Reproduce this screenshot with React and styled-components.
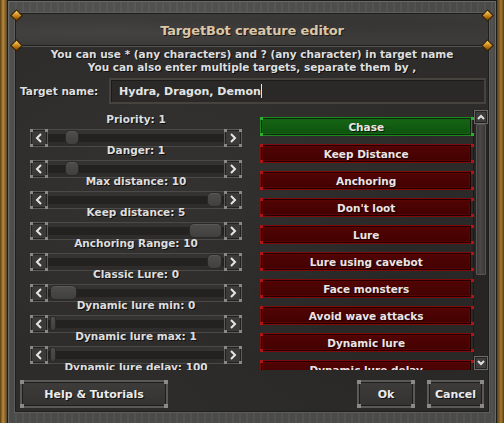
import React from "react";
import styled, { createGlobalStyle, css } from "styled-components";

const Global = createGlobalStyle`
  html, body { margin: 0; padding: 0; }
  body {
    width: 504px;
    height: 423px;
    overflow: hidden;
    background: linear-gradient(90deg, #5a3c12 0px, #b88a3a 3px, #7a5520 6px, #4a4a4a 7px, #4a4a4a 497px, #6a4a1a 498px, #a27a34 501px, #5a3c12 504px);
    font-family: "DejaVu Sans", Verdana, sans-serif;
  }
`;

const Frame = styled.div`
  box-sizing: border-box;
  margin-left: 7px;
  width: 490px;
  height: 423px;
  padding: 12px 7px 0 7px;
  border-left: 1px solid #1c1c1c;
  border-right: 1px solid #1c1c1c;
  border-top: 1px solid #1c1c1c;
  background:
    repeating-linear-gradient(90deg, rgba(255,255,255,0.04) 0 2px, transparent 2px 7px),
    radial-gradient(circle at 30% 20%, rgba(255,255,255,0.05), transparent 60%),
    #4b4b4a;
  box-shadow: inset 1px 1px 0 #6a6a68, inset -1px 0 0 #6a6a68;
`;

const Inner = styled.div`
  box-sizing: border-box;
  width: 474px;
  height: 399px;
  border: 1px solid #1e1e1d;
  box-shadow: 0 0 0 1px #5e5e5c;
  display: flex;
  flex-direction: column;
`;

const Header = styled.div`
  position: relative;
  height: 31px;
  border-bottom: 1px solid #1e1e1d;
  box-shadow: 0 1px 0 #555;
  background:
    radial-gradient(ellipse at 20% 60%, rgba(255,255,255,0.04), transparent 50%),
    radial-gradient(ellipse at 75% 30%, rgba(0,0,0,0.10), transparent 50%),
    #3c3b39;
  display: flex;
  align-items: center;
  justify-content: center;
`;

const Title = styled.div`
  font-weight: bold;
  font-size: 13px;
  color: #dcc6a6;
  letter-spacing: -0.15px;
  margin-top: 2px;
  text-shadow: 1px 1px 0 #1a1a1a;
`;

const Diamond = styled.div`
  position: absolute;
  width: 7px;
  height: 7px;
  transform: rotate(45deg);
  background: linear-gradient(135deg, #ffd870, #c07a10 60%, #6a3a00);
  border: 1px solid #3a2200;
  ${(p) => (p.$right ? css`right: -4px;` : css`left: -4px;`)}
  ${(p) => (p.$bottom ? css`bottom: -5px;` : css`top: -3px;`)}
`;

const Content = styled.div`
  flex: 1;
  background:
    radial-gradient(ellipse at 30% 40%, rgba(255,255,255,0.03), transparent 60%),
    radial-gradient(ellipse at 80% 70%, rgba(0,0,0,0.12), transparent 50%),
    #2d2c2b;
  display: flex;
  flex-direction: column;
  color: #dedede;
  font-size: 10.5px;
  font-weight: bold;
`;

const Info = styled.div`
  text-align: center;
  line-height: 13px;
  padding-top: 2px;
  text-shadow: 1px 1px 0 #111;
`;

const NameRow = styled.div`
  display: flex;
  align-items: center;
  margin-top: 4px;
  padding-left: 4px;
  height: 26px;
`;

const NameLabel = styled.div`
  width: 89px;
  font-size: 10.5px;
  text-shadow: 1px 1px 0 #111;
`;

const Input = styled.div`
  box-sizing: border-box;
  width: 377px;
  height: 26px;
  border: 2px solid #46433e;
  box-shadow: inset 1px 1px 0 #1c1b1a;
  background: #2a2927;
  padding-left: 8px;
  display: flex;
  align-items: center;
  font-size: 11px;
  color: #e4e4e4;
`;

const Caret = styled.span`
  display: inline-block;
  width: 1px;
  height: 14px;
  background: #e4e4e4;
`;

const Main = styled.div`
  display: flex;
  height: 260px;
  margin-top: 6px;
  overflow: hidden;
`;

const LeftCol = styled.div`
  width: 247px;
  padding: 3px 0 0 14px;
  box-sizing: border-box;
  display: flex;
  flex-direction: column;
`;

const SliderItem = styled.div`
  width: 212px;
  margin-bottom: -3px;
`;

const SliderLabel = styled.div`
  text-align: center;
  line-height: 12px;
  height: 12px;
  position: relative;
  z-index: 1;
  text-shadow: 1px 1px 0 #111;
`;

const Track = styled.div`
  display: flex;
  height: 18px;
  margin-top: 4px;
`;

const ArrowBtn = styled.div`
  position: relative;
  box-sizing: border-box;
  width: 18px;
  height: 18px;
  background: #3b3a39;
  border: 1px solid #5c5b59;
  box-shadow: inset 0 0 0 1px #232221;
  display: flex;
  align-items: center;
  justify-content: center;
  &::before, &::after {
    content: "";
    position: absolute;
    width: 3px;
    height: 3px;
    background: #8a8986;
  }
  &::before { top: -1px; left: -1px; box-shadow: 15px 0 0 #8a8986; }
  &::after { bottom: -1px; left: -1px; box-shadow: 15px 0 0 #8a8986; }
`;

const Bar = styled.div`
  position: relative;
  flex: 1;
  box-sizing: border-box;
  border-top: 1px solid #4a4947;
  border-bottom: 1px solid #4a4947;
  background: linear-gradient(#343331 0 4px, #232221 4px 12px, #2e2d2c 12px);
`;

const Thumb = styled.div`
  position: absolute;
  top: 0px;
  height: 15px;
  box-sizing: border-box;
  border-radius: 5px;
  background: linear-gradient(#4e4d4b, #40403e);
  border: 1px solid #2a2928;
  box-shadow: inset 0 1px 0 #5a5957;
`;

const Chevron = ({ dir }) => (
  <svg width="8" height="10" viewBox="0 0 8 10">
    <path
      d={dir === "left" ? "M6 1 L2 5 L6 9" : "M2 1 L6 5 L2 9"}
      fill="none"
      stroke="#e6e6e6"
      strokeWidth="2"
    />
  </svg>
);

const Slider = ({ label, left, width }) => (
  <SliderItem>
    <SliderLabel>{label}</SliderLabel>
    <Track>
      <ArrowBtn>
        <Chevron dir="left" />
      </ArrowBtn>
      <Bar>
        <Thumb style={{ left: left, width: width }} />
      </Bar>
      <ArrowBtn>
        <Chevron dir="right" />
      </ArrowBtn>
    </Track>
  </SliderItem>
);

const RightCol = styled.div`
  width: 214px;
  padding-top: 7px;
  display: flex;
  flex-direction: column;
  gap: 8px;
`;

const Toggle = styled.div`
  position: relative;
  flex: none;
  box-sizing: border-box;
  height: 19px;
  display: flex;
  align-items: center;
  justify-content: center;
  color: #ece4e4;
  text-shadow: 1px 1px 0 #1a0000;
  ${(p) =>
    p.$on
      ? css`
          border: 1px solid #1a8a1a;
          box-shadow: inset 0 0 0 1px #0a2a0a, inset 0 0 0 2px #176017;
          background: linear-gradient(#166616, #0d520d);
          text-shadow: 1px 1px 0 #032003;
        `
      : css`
          border: 1px solid #800a0a;
          box-shadow: inset 0 0 0 1px #220000, inset 0 0 0 2px #5a0404;
          background: linear-gradient(#520404, #420101);
        `}
  &::before, &::after {
    content: "";
    position: absolute;
    width: 3px;
    height: 3px;
    background: ${(p) => (p.$on ? "#2cb02c" : "#b01414")};
  }
  &::before { top: -1px; left: -1px; box-shadow: 211px 0 0 ${(p) => (p.$on ? "#2cb02c" : "#b01414")}; }
  &::after { bottom: -1px; left: -1px; box-shadow: 211px 0 0 ${(p) => (p.$on ? "#2cb02c" : "#b01414")}; }
`;

const ScrollBar = styled.div`
  width: 14px;
  margin-left: 1px;
  display: flex;
  flex-direction: column;
  background: #262524;
  border-left: 1px solid #1a1a19;
`;

const ScrollBtn = styled.div`
  box-sizing: border-box;
  width: 14px;
  height: 14px;
  background: #3e3d3b;
  border: 1px solid #6a6967;
  box-shadow: inset 0 0 0 1px #242322;
  display: flex;
  align-items: center;
  justify-content: center;
`;

const ScrollThumb = styled.div`
  box-sizing: border-box;
  margin: 0 2px;
  height: 151px;
  background: linear-gradient(90deg, #3a3937, #4a4947 40%, #3a3937);
  border: 1px solid #575654;
  border-radius: 1px;
`;

const ScrollSpace = styled.div`
  flex: 1;
`;

const Footer = styled.div`
  display: flex;
  align-items: center;
  padding: 10px 4px 0 4px;
  gap: 12px;
`;

const FootBtn = styled.div`
  position: relative;
  box-sizing: border-box;
  width: ${(p) => p.$w}px;
  height: 28px;
  background: linear-gradient(#3e3c3a, #353331);
  border: 2px solid #5b5955;
  box-shadow: inset 0 0 0 1px #1e1d1c;
  display: flex;
  align-items: center;
  justify-content: center;
  font-size: 11px;
  color: #ececec;
  text-shadow: 1px 1px 0 #111;
  &::before, &::after {
    content: "";
    position: absolute;
    width: 4px;
    height: 4px;
    background: #8c8a86;
  }
  &::before { top: -2px; left: -2px; box-shadow: ${(p) => p.$w - 4}px 0 0 #8c8a86; }
  &::after { bottom: -2px; left: -2px; box-shadow: ${(p) => p.$w - 4}px 0 0 #8c8a86; }
`;

const Spacer = styled.div`
  flex: 1;
`;

const sliders = [
  ["Priority: 1", 17, 14],
  ["Danger: 1", 17, 14],
  ["Max distance: 10", 159, 15],
  ["Keep distance: 5", 141, 33],
  ["Anchoring Range: 10", 159, 15],
  ["Classic Lure: 0", 2, 27],
  ["Dynamic lure min: 0", 2, 6],
  ["Dynamic lure max: 1", 2, 6],
  ["Dynamic lure delay: 100", 2, 6],
];

const toggles = [
  ["Chase", true],
  ["Keep Distance"],
  ["Anchoring"],
  ["Don't loot"],
  ["Lure"],
  ["Lure using cavebot"],
  ["Face monsters"],
  ["Avoid wave attacks"],
  ["Dynamic lure"],
  ["Dynamic lure delay"],
];

export default function App() {
  return (
    <>
      <Global />
      <Frame>
        <Inner>
          <Header>
            <Diamond />
            <Diamond $bottom />
            <Diamond $right />
            <Diamond $right $bottom />
            <Title>TargetBot creature editor</Title>
          </Header>
          <Content>
            <Info>
              You can use * (any characters) and ? (any character) in target name
              <br />
              You can also enter multiple targets, separate them by ,
            </Info>
            <NameRow>
              <NameLabel>Target name:</NameLabel>
              <Input>
                Hydra, Dragon, Demon
                <Caret />
              </Input>
            </NameRow>
            <Main>
              <LeftCol>
                {sliders.map(([l, left, w]) => (
                  <Slider key={l} label={l} left={left} width={w} />
                ))}
              </LeftCol>
              <RightCol>
                {toggles.map(([t, on]) => (
                  <Toggle key={t} $on={on}>
                    {t}
                  </Toggle>
                ))}
              </RightCol>
              <ScrollBar>
                <ScrollBtn>
                  <svg width="8" height="6" viewBox="0 0 8 6">
                    <path d="M1 5 L4 2 L7 5" fill="none" stroke="#e0e0e0" strokeWidth="2" />
                  </svg>
                </ScrollBtn>
                <ScrollThumb />
                <ScrollSpace />
                <ScrollBtn>
                  <svg width="8" height="6" viewBox="0 0 8 6">
                    <path d="M1 1 L4 4 L7 1" fill="none" stroke="#e0e0e0" strokeWidth="2" />
                  </svg>
                </ScrollBtn>
              </ScrollBar>
            </Main>
            <Footer>
              <FootBtn $w={148}>Help &amp; Tutorials</FootBtn>
              <Spacer />
              <FootBtn $w={58}>Ok</FootBtn>
              <FootBtn $w={57}>Cancel</FootBtn>
            </Footer>
          </Content>
        </Inner>
      </Frame>
    </>
  );
}
